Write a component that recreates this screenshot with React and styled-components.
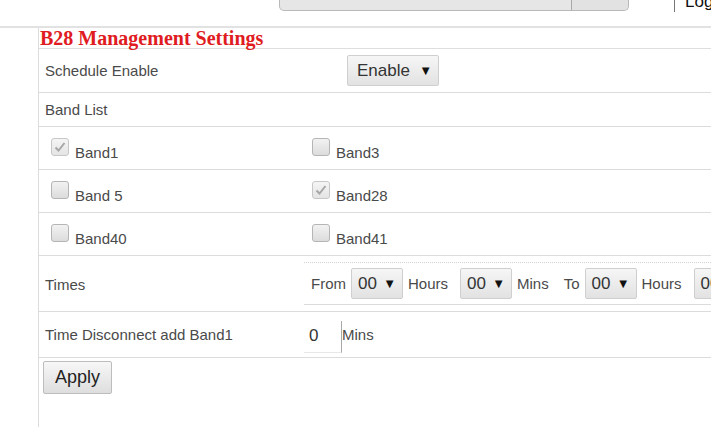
import React from 'react';
import styled, { createGlobalStyle } from 'styled-components';

const GlobalStyle = createGlobalStyle`
  html, body {
    margin: 0;
    padding: 0;
    background: #fff;
    overflow: hidden;
  }
  body {
    font-family: 'Liberation Sans', Arial, sans-serif;
    color: #4a4a4a;
  }
`;

const bands = [
  [{ name: 'Band1', checked: true }, { name: 'Band3', checked: false }],
  [{ name: 'Band 5', checked: false }, { name: 'Band28', checked: true }],
  [{ name: 'Band40', checked: false }, { name: 'Band41', checked: false }],
];

const CheckMark = () => (
  <svg width="12" height="12" viewBox="0 0 12 12">
    <path d="M1.5 6.5 L4.5 9.5 L10.5 2" fill="none" stroke="#8a8a8a" strokeWidth="2" />
  </svg>
);

const Dropdown = ({ value, wide }) => (
  <SelectBox $wide={wide}>
    <span>{value}</span>
    <Arrow>▼</Arrow>
  </SelectBox>
);

const App = () => {
  return (
    <>
      <GlobalStyle />
      <Header>
        <SearchBox>
          <SearchButton />
        </SearchBox>
        <HeaderDivider />
        <Logout>Log</Logout>
      </Header>
      <Main>
        <Gutter />
        <Content>
          <Title>B28 Management Settings</Title>
          <Row $h={44}>
            <Label>Schedule Enable</Label>
            <Cell $pad={43}>
              <Dropdown value="Enable" wide />
            </Cell>
          </Row>
          <Row $h={34}>
            <Label>Band List</Label>
          </Row>
          {bands.map((pair, i) => (
            <Row key={i} $h={43}>
              {pair.map((b, j) => (
                <CheckCell key={b.name} $pad={j === 0 ? 12 : 8}>
                  <Box $checked={b.checked}>{b.checked && <CheckMark />}</Box>
                  <CheckLabel>{b.name}</CheckLabel>
                </CheckCell>
              ))}
            </Row>
          ))}
          <Row $h={56}>
            <Label>Times</Label>
            <TimeCell>
              <TimeLine>
                <Word>From</Word>
                <Dropdown value="00" />
                <Word>Hours</Word>
                <Spacer />
                <Dropdown value="00" />
                <Word>Mins</Word>
                <Spacer $w={5} />
                <Word>To</Word>
                <Dropdown value="00" />
                <Word>Hours</Word>
                <Spacer />
                <Dropdown value="00" />
              </TimeLine>
            </TimeCell>
          </Row>
          <Row $h={46}>
            <Label>Time Disconnect add Band1</Label>
            <Cell>
              <NumberInput>0</NumberInput>
              <Word $tight>Mins</Word>
            </Cell>
          </Row>
          <Footer>
            <Button>Apply</Button>
          </Footer>
        </Content>
      </Main>
    </>
  );
};

export default App;

const Header = styled.div`
  display: flex;
  align-items: flex-start;
  height: 26px;
  padding-left: 279px;
  border-bottom: 2px solid #e2e2e2;
  overflow: hidden;
  & > * {
    flex: none;
  }
`;

const SearchBox = styled.div`
  position: relative;
  width: 348px;
  height: 10px;
  background: #e6e6e6;
  border: 1px solid #b9b9b9;
  border-top: none;
  border-radius: 0 0 5px 5px;
`;

const SearchButton = styled.div`
  position: absolute;
  right: 0;
  top: 0;
  width: 56px;
  height: 10px;
  border-left: 1px solid #a9a9a9;
  background: #e2e2e2;
  border-radius: 0 0 5px 0;
`;

const HeaderDivider = styled.div`
  width: 1px;
  height: 12px;
  margin-left: 45px;
  background: #777;
`;

const Logout = styled.div`
  margin-left: 10px;
  margin-top: -8px;
  font-size: 17px;
  color: #111;
  white-space: nowrap;
`;

const Main = styled.div`
  display: flex;
  height: 400px;
`;

const Gutter = styled.div`
  width: 38px;
  flex: none;
  border-right: 1px solid #dcdcdc;
`;

const Content = styled.div`
  flex: 1;
  min-width: 0;
  overflow: hidden;
`;

const Title = styled.div`
  height: 20px;
  padding-left: 1px;
  font-family: 'Liberation Serif', 'DejaVu Serif', serif;
  font-weight: bold;
  font-size: 20px;
  line-height: 20px;
  color: #e01b22;
  border-bottom: 1px solid #dedede;
`;

const Row = styled.div`
  display: grid;
  grid-template-columns: 265px 1fr;
  height: ${(p) => p.$h - 1}px;
  border-bottom: 1px solid #dcdcdc;
`;

const Label = styled.div`
  display: flex;
  align-items: center;
  padding-left: 6px;
  font-size: 15px;
  color: #4a4a4a;
`;

const Cell = styled.div`
  display: flex;
  align-items: center;
  padding-left: ${(p) => p.$pad || 0}px;
`;

const CheckCell = styled.div`
  display: flex;
  align-items: center;
  padding-left: ${(p) => p.$pad}px;
`;

const Box = styled.span`
  display: inline-flex;
  align-items: center;
  justify-content: center;
  box-sizing: border-box;
  width: 18px;
  height: 18px;
  margin-top: -3px;
  border: 1px solid #b5b5b5;
  border-radius: 3px;
  background: linear-gradient(#f2f2f2, #dcdcdc);
  opacity: ${(p) => (p.$checked ? 0.75 : 1)};
`;

const CheckLabel = styled.span`
  margin-left: 6px;
  margin-top: 9px;
  font-size: 15px;
  color: #4a4a4a;
`;

const TimeCell = styled.div`
  padding: 6px 0 7px;
  min-width: 0;
`;

const TimeLine = styled.div`
  display: flex;
  align-items: center;
  height: 41px;
  padding-left: 2px;
  border-top: 1px dotted #d4d4d4;
  border-bottom: 1px solid #dcdcdc;
  white-space: nowrap;
  overflow: hidden;
`;

const Word = styled.span`
  flex: none;
  font-size: 15px;
  color: #4a4a4a;
  margin: 0 ${(p) => (p.$tight ? 0 : 5)}px;
`;

const Spacer = styled.span`
  display: inline-block;
  width: ${(p) => p.$w || 7}px;
  flex: none;
`;

const SelectBox = styled.div`
  display: inline-flex;
  align-items: center;
  justify-content: space-between;
  box-sizing: border-box;
  flex: none;
  width: ${(p) => (p.$wide ? 92 : 52)}px;
  height: 31px;
  padding: 0 6px 0 ${(p) => (p.$wide ? 9 : 6)}px;
  border: 1px solid #cfcfcf;
  border-radius: 2px;
  background: linear-gradient(#f6f6f6, #e2e2e2);
  font-size: 17px;
  color: #333;
`;

const Arrow = styled.span`
  font-size: 13px;
  color: #111;
`;

const NumberInput = styled.div`
  box-sizing: border-box;
  width: 38px;
  height: 32px;
  margin-top: 4px;
  padding-left: 5px;
  display: flex;
  align-items: center;
  font-size: 17px;
  color: #333;
  border-right: 1px solid #a8a8a8;
  border-bottom: 1px solid #e8e8e8;
`;

const Footer = styled.div`
  padding: 3px 0 0 4px;
`;

const Button = styled.button`
  width: 69px;
  height: 33px;
  padding: 0;
  font-family: 'Liberation Sans', Arial, sans-serif;
  font-size: 18px;
  color: #222;
  border: 1px solid #bdbdbd;
  border-radius: 2px;
  background: linear-gradient(#f7f7f7, #dedede);
`;
